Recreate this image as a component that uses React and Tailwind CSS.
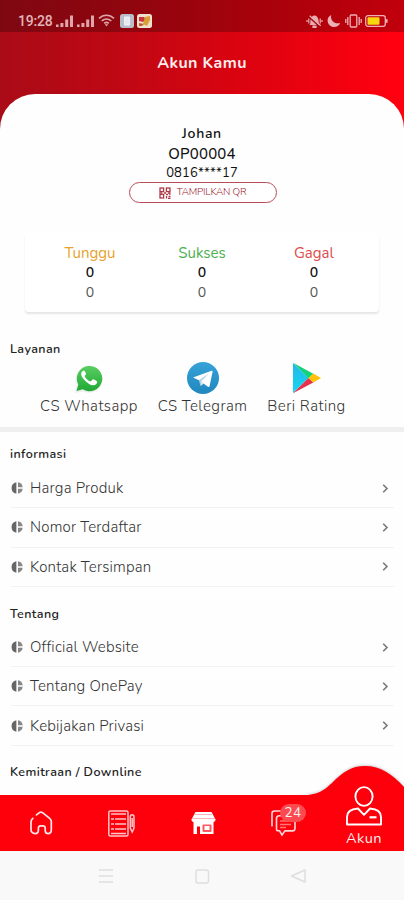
import React from "react";

const nunito = "font-['Nunito','Open_Sans',sans-serif]";

function Signal() {
  return (
    <svg className="h-[13px] w-[18px]" viewBox="0 0 18 13" fill="#e0a5aa">
      <rect x="0" y="9.5" width="2.6" height="2.5" />
      <rect x="4.4" y="8" width="3" height="4" />
      <rect x="9.2" y="4.5" width="3" height="7.5" />
      <rect x="14" y="0.5" width="3" height="11.5" />
    </svg>
  );
}

function StatusBar() {
  return (
    <div className="flex h-8 items-start bg-black/25 pl-[18px] pr-[16px] pt-[13px]">
      <span className="w-[35px] whitespace-nowrap font-[Roboto,sans-serif] text-[14px] font-medium leading-[17px] tracking-[-0.2px] text-[#e3b4b8]">
        19:28
      </span>
      <div className="ml-[3px] mt-[2px] flex gap-[3px]">
        <Signal />
        <Signal />
      </div>
      <svg className="ml-[3px] mt-[1px] h-[13px] w-[17px]" viewBox="0 0 17 13" fill="none" stroke="#e0a5aa" strokeWidth="1.700">
        <path d="M1 4.400C5.400.2 11.600.2 16 4.400M3.700 7c2.900-2.700 6.700-2.700 9.600 0M6.200 9.400c1.400-1.200 3.200-1.200 4.600 0" />
        <path d="M6.700 10.300h3.600L8.500 12.400z" fill="#e0a5aa" stroke="none" />
      </svg>
      <svg className="ml-[5px] mt-[1px] h-[14px] w-[14px]" viewBox="0 0 14 14">
        <rect width="14" height="14" rx="2.500" fill="#b9bfca" />
        <rect x="4" y="2.500" width="6" height="9" rx="1" fill="#eef1f5" />
        <path d="M5 5h4M5 7h4M5 9h4" stroke="#dde1e8" />
      </svg>
      <svg className="ml-[3px] mt-[1px] h-[14px] w-[15px]" viewBox="0 0 15 14">
        <rect width="15" height="14" rx="2.500" fill="#f1dfcd" />
        <path d="M2 3h5l2 3-3 2-4-1z" fill="#c9363c" />
        <path d="M8 3l5-1v4l-3 6-4-2z" fill="#d9a036" />
        <path d="M2 9l5 1-2 2H2z" fill="#b7602f" />
      </svg>
      <div className="flex-1" />
      <svg className="mt-[1px] h-[14px] w-[17px]" viewBox="0 0 17 14">
        <path d="M3.500 11c1.200-1.400.7-3 1-5C4.900 3.400 6.500 1.500 8.500 1.500s3.600 1.900 4 4.500c.3 2-.2 3.600 1 5z" fill="#e9adb1" />
        <path d="M7 12h3v1.300H7zM1 6v2M16 6v2M2.800 4.500v5M14.200 4.500v5" fill="#e9adb1" stroke="#e9adb1" strokeWidth="1.200" />
        <path d="M2.500 2.500l11.500 10.500" stroke="#a00810" strokeWidth="1.600" />
        <path d="M3.700 1.700l11 10" stroke="#e9adb1" strokeWidth="1.200" />
      </svg>
      <svg className="ml-[4px] mt-[1px] h-[14px] w-[14px]" viewBox="0 0 14 14">
        <path d="M4.200 1C1.500 2.300.4 4.500.6 7c.3 3.400 3 6 6.400 6 2.800 0 5.200-1.600 6.200-4C8 10.600 3 6.600 4.200 1z" fill="#eeb0b4" />
      </svg>
      <svg className="ml-[4px] mt-[1px] h-[14px] w-[17px]" viewBox="0 0 17 14" fill="none" stroke="#eeb0b4" strokeWidth="1.300">
        <rect x="5.200" y="1" width="6.600" height="12" rx="1" />
        <path d="M2.800 3v8M.8 5v4M14.200 3v8M16.200 5v4" />
      </svg>
      <svg className="ml-[3px] mt-[2px] h-[12px] w-[23px]" viewBox="0 0 23 12">
        <rect x=".7" y=".7" width="19.600" height="10.600" rx="2.200" fill="none" stroke="#eeb0b4" strokeWidth="1.300" />
        <rect x="2.500" y="2.200" width="12" height="7.600" rx="1" fill="#f6d60f" />
        <rect x="21" y="4" width="1.600" height="4" rx=".8" fill="#eeb0b4" />
      </svg>
    </div>
  );
}

function QrIcon() {
  return (
    <svg className="h-[12px] w-[12px]" viewBox="0 0 12 12" fill="none" stroke="#b03a45" strokeWidth="1.300">
      <rect x="1" y="1" width="3.600" height="3.600" />
      <rect x="7.400" y="1" width="3.600" height="3.600" />
      <rect x="1" y="7.400" width="3.600" height="3.600" />
      <path d="M7 7.500h2M10 7h1.500M7.500 9v2.500M9.500 9.500h2M9 11.500h2.500M.3 6h3M5 6h2M9 6h2.500" />
    </svg>
  );
}

const stats = [
  { label: "Tunggu", color: "text-[#e6a12c]" },
  { label: "Sukses", color: "text-[#4caf50]" },
  { label: "Gagal", color: "text-[#dc4c4c]" },
];

function WhatsappIcon() {
  return (
    <svg className="h-[30px] w-[30px]" viewBox="0 0 30 30">
      <defs>
        <linearGradient id="wa" x1="0" y1="0" x2="0" y2="1">
          <stop offset="0" stopColor="#59cf62" />
          <stop offset="1" stopColor="#20a834" />
        </linearGradient>
      </defs>
      <path d="M1 30l2-7.700A13.500 13.500 0 1 1 9.300 28.400z" fill="#eceeec" />
      <path d="M2.500 28l1.800-6.500A12.700 12.700 0 1 1 8.700 26.300z" fill="url(#wa)" />
      <path
        d="M11.100 8.700c-.4-.9-.8-.9-1.300-.9-1.500 0-2.600 1.500-2.600 3.500 0 2 1.500 4 3.700 6.200 2.500 2.500 5.200 4.800 8.300 4.800 2.200 0 4-1.400 4-3.300 0-.6-.1-.8-.6-1.100l-2.900-1.600c-.6-.2-.9-.1-1.300.4l-1.300 1.400c-.3.400-.7.400-1.200.2-2.300-1-4-2.700-5.100-4.800-.2-.4-.1-.7.2-1l.8-1c.3-.4.3-.7.100-1.100z"
        fill="#fff"
      />
    </svg>
  );
}

function TelegramIcon() {
  return (
    <svg className="h-[32px] w-[32px]" viewBox="0 0 32 32">
      <defs>
        <linearGradient id="tg" x1="0" y1="0" x2="0" y2="1">
          <stop offset="0" stopColor="#36a3d8" />
          <stop offset="1" stopColor="#2187bd" />
        </linearGradient>
      </defs>
      <circle cx="16" cy="16" r="16" fill="url(#tg)" />
      <path d="M6 15.600L24.600 8.700c.8-.2 1.100.2 1 1l-3 14.300c-.2 1-.9 1.200-1.700.7L12 18.200z" fill="#fff" />
      <path d="M12 18l10-6.600-7.800 8-.8 4.700z" fill="#b7d5e8" />
      <path d="M13.400 24.100l.8-4.700 2.700 2z" fill="#d8e8f2" />
    </svg>
  );
}

function PlayIcon() {
  return (
    <svg className="h-[32px] w-[28px]" viewBox="0 0 28 32">
      <defs>
        <linearGradient id="gp" x1="0" y1="0" x2="0" y2="1">
          <stop offset="0" stopColor="#20b8e8" />
          <stop offset="1" stopColor="#16d6f0" />
        </linearGradient>
      </defs>
      <path d="M0 1v30L15.500 16z" fill="url(#gp)" />
      <path d="M0 .8L20.300 11.800 15.500 16.300z" fill="#15d17c" />
      <path d="M0 31.200L15.500 16l4.800 4.500z" fill="#e8304a" />
      <path d="M20.300 11.600L28 16l-7.700 4.500-4.900-4.500z" fill="#fdc30a" />
    </svg>
  );
}

const services = [
  { label: "CS Whatsapp", Icon: WhatsappIcon, box: "w-[98px]" },
  { label: "CS Telegram", Icon: TelegramIcon, box: "w-[89px]" },
  { label: "Beri Rating", Icon: PlayIcon, box: "w-[79px]" },
];

function Bullet() {
  return (
    <svg className="h-[12px] w-[12px]" viewBox="0 0 12 12" fill="#666">
      <path d="M5.400.2v11.600A5.900 5.900 0 0 1 5.400.2z" />
      <path d="M7 .3A5.700 5.700 0 0 1 11.700 5.200H7zM7 6.800h4.700A5.700 5.700 0 0 1 7 11.700z" fill="#888" />
    </svg>
  );
}

function Row({ label }) {
  return (
    <div className="ml-[11px] mr-[10px] flex h-[39.300px] items-center border-b border-[#f2f2f2]">
      <Bullet />
      <span className="ml-[7px] flex-1 whitespace-nowrap text-[15px] font-light leading-5 tracking-[0.200px] text-[#333]">{label}</span>
      <svg className="mr-[5px] h-[9px] w-[7px]" viewBox="0 0 7 9" fill="none" stroke="#777" strokeWidth="1.600">
        <path d="M1.200 .7L5 4.500 1.200 8.300" />
      </svg>
    </div>
  );
}

function Heading({ children }) {
  return (
    <h2 className="ml-[10px] whitespace-nowrap text-[12.500px] font-semibold leading-[16px] tracking-[0.420px] text-[#222]">{children}</h2>
  );
}

function BottomNav() {
  return (
    <div className="relative flex h-14 shrink-0 bg-[#fe000c]">
      <svg className="absolute right-0 top-[-34px] h-[35px] w-[108px] drop-shadow-[0_-1px_1px_rgba(0,0,0,0.18)]" viewBox="0 0 108 35" fill="#fe000c">
        <path d="M0 35C22 34 26 31 36 22C47 11 55 5 69 5C85 5 96 13 108 26V35z" />
      </svg>
      <div className="flex w-[81px] items-center justify-center">
        <svg className="h-[24px] w-[24px]" viewBox="0 0 24 24" fill="none" stroke="#ffe9ea" strokeWidth="1.700" strokeLinecap="round" strokeLinejoin="round">
          <path d="M7.500 3.900L10.400 1.600c1-.8 2-.8 3.100 0l6.900 5.500c1.300 1 1.900 2 1.900 3.500v8.400c0 2.200-1.200 3.600-3.400 3.600-1.800 0-2.700-1.200-2.700-3v-2.600c0-1.300-.9-2.200-2.400-2.200h-2c-1.500 0-2.400 1-2.400 2.300v1.900c0 2.200-1.100 3.600-3.200 3.600-2.600 0-4.200-1.600-4.200-4.200v-7.200c0-1.700.5-2.800 1.800-3.900" />
        </svg>
      </div>
      <div className="flex w-[81px] items-center justify-center">
        <svg className="h-[27px] w-[27px]" viewBox="0 0 27 27" fill="none" stroke="#ffc4c8" strokeWidth="1.500">
          <rect x=".8" y="1" width="19.200" height="25" rx="1.500" />
          <path d="M3 4h15M3 9h3M7 9h11M3 14h3M7 14h11M3 19h3M7 19h11M3 23.500h15" />
          <path d="M22.300 7c0-3 3.700-3 3.700 0v11l-1.800 4-1.900-4zM24.200 8v9" />
        </svg>
      </div>
      <div className="flex w-[82px] items-center justify-center">
        <svg className="h-[24px] w-[25px]" viewBox="0 0 25 24">
          <path d="M4.500 1h16l4 7.500c0 1.500-1 2.500-2 2.500h-20c-1.200 0-2-1-2-2.500z" fill="#fff" />
          <path d="M4 3.500h17M1.500 7.500h22" stroke="#ff9ca1" strokeWidth=".8" />
          <path d="M2.500 11h20v12H9v-7.500H6V23H2.500z" fill="#fff" />
          <rect x="11.500" y="13.500" width="9" height="7.500" rx="1" fill="#fe5960" />
          <rect x="13.500" y="15" width="5" height="4" fill="#fff" />
        </svg>
      </div>
      <div className="relative w-[80px]">
        <svg className="ml-[27px] mt-[15px] h-[27px] w-[26px]" viewBox="0 0 26 27" fill="none" stroke="#ffd8da" strokeWidth="1.600">
          <path d="M1 16.500V3.500C1 1.700 1.800 1 3.500 1H18" />
          <path d="M5.500 19V8.500c0-2 1-2.800 2.800-2.800h13c1.800 0 2.700.9 2.700 2.700v9.800c0 1.800-1 2.700-2.700 2.700h-7.300L11 25l-2.500-4.200H7.200c-1.100 0-1.700-.7-1.700-1.800z" />
          <path d="M9 11h11M9 14.500h11M9 17.500h6" stroke="#f77" />
        </svg>
        <span className="absolute left-[36px] top-[9px] flex h-[18px] w-[26px] items-center justify-center rounded-full bg-[#fb4a50] text-[13.500px] leading-none tracking-[0.300px] text-[#fff0f0]">
          24
        </span>
      </div>
      <div className="relative flex w-[80px] flex-col items-center">
        <svg className="-mt-[9px] h-[40px] w-[36px] shrink-0" viewBox="0 0 36 40" fill="none" stroke="#fff" strokeWidth="1.900" strokeLinejoin="round">
          <ellipse cx="18" cy="10.500" rx="8.600" ry="9.400" />
          <path d="M12 22.500c-6 .5-11 2.500-11 8.500v7.500h34V31c0-6-5-8-11-8.500L18 28.800z" />
          <path d="M23.500 31.300h7" strokeWidth="2.200" />
        </svg>
        <span className="mt-[2px] text-[14.500px] leading-[20px] tracking-[0.500px] text-[#fff0f0]">Akun</span>
      </div>
    </div>
  );
}

export default function App() {
  return (
    <div className={`flex h-[900px] w-[404px] flex-col overflow-hidden bg-white ${nunito}`}>
      <div className="bg-[linear-gradient(90deg,#a90b17_0%,#c30713_35%,#e0020f_65%,#ff0010_97%)]">
        <StatusBar />
        <h1 className="flex h-[62px] items-center justify-center text-[16px] font-bold tracking-[0.400px] text-[#ffeeee]">Akun Kamu</h1>
        <div className="flex h-[35px] flex-col items-center justify-end rounded-t-[35px] bg-[#fefefe]" />
      </div>
      <main className="flex min-h-0 flex-1 flex-col bg-[#fefefe]">
        <div className="-mt-[5px] flex shrink-0 flex-col items-center text-[#111]">
          <p className="text-[14px] font-semibold leading-[20px] tracking-[0.700px]">Johan</p>
          <p className="text-[15px] font-medium leading-[20px] tracking-[0.200px]">OP00004</p>
          <p className="pt-px text-[13px] leading-[17px] tracking-[0.150px]">0816****17</p>
          <button className="ml-px flex h-[21px] w-[148px] items-center justify-center gap-[6px] rounded-full border border-[#b84c56] bg-white text-[10px] font-light text-[#a02430]">
            <QrIcon />
            <span className="whitespace-nowrap tracking-[-0.200px]">TAMPILKAN QR</span>
          </button>
        </div>
        <section className="mx-[25px] mt-[30px] flex h-[79px] shrink-0 justify-center rounded-[4px] bg-white pt-[10px] shadow-[0_2px_2px_rgba(0,0,0,0.1)]">
          {stats.map((s) => (
            <div key={s.label} className="flex w-[112px] flex-col items-center leading-5">
              <span className={`text-[15px] ${s.color}`}>{s.label}</span>
              <span className="text-[14px] font-semibold text-[#111]">0</span>
              <span className="text-[14px] text-[#555]">0</span>
            </div>
          ))}
        </section>
        <div className="mt-[29px] shrink-0">
          <Heading>Layanan</Heading>
        </div>
        <section className="ml-[40px] mt-[4px] flex shrink-0 gap-[20px]">
          {services.map(({ label, Icon, box }) => (
            <div key={label} className={`flex flex-col items-center ${box}`}>
              <div className="flex h-[33px] items-center">
                <Icon />
              </div>
              <span className="mt-[1px] whitespace-nowrap text-[15px] font-light leading-[22px] tracking-[0.450px] text-[#333]">{label}</span>
            </div>
          ))}
        </section>
        <div className="mt-[10px] h-[5px] shrink-0 bg-[#efefef]" />
        <div className="mt-[14px] shrink-0">
          <Heading>informasi</Heading>
          <div className="mt-[7px]">
            <Row label="Harga Produk" />
            <Row label="Nomor Terdaftar" />
            <Row label="Kontak Tersimpan" />
          </div>
        </div>
        <div className="mt-[19px] shrink-0">
          <Heading>Tentang</Heading>
          <div className="mt-[6px]">
            <Row label="Official Website" />
            <Row label="Tentang OnePay" />
            <Row label="Kebijakan Privasi" />
          </div>
        </div>
        <div className="mt-[18px] shrink-0">
          <Heading>Kemitraan / Downline</Heading>
        </div>
      </main>
      <BottomNav />
      <div className="flex h-[49px] shrink-0 items-center justify-center bg-[#f9f9f9]">
        <svg className="h-[16px] w-[210px]" viewBox="0 0 210 16" fill="none" stroke="#dedede" strokeWidth="1.500">
          <path d="M2 2h14M2 8h14M2 14h14" />
          <rect x="99" y="2" width="12.500" height="13" rx="2" />
          <path d="M208 2v12l-13.500-6z" strokeLinejoin="round" />
        </svg>
      </div>
    </div>
  );
}
